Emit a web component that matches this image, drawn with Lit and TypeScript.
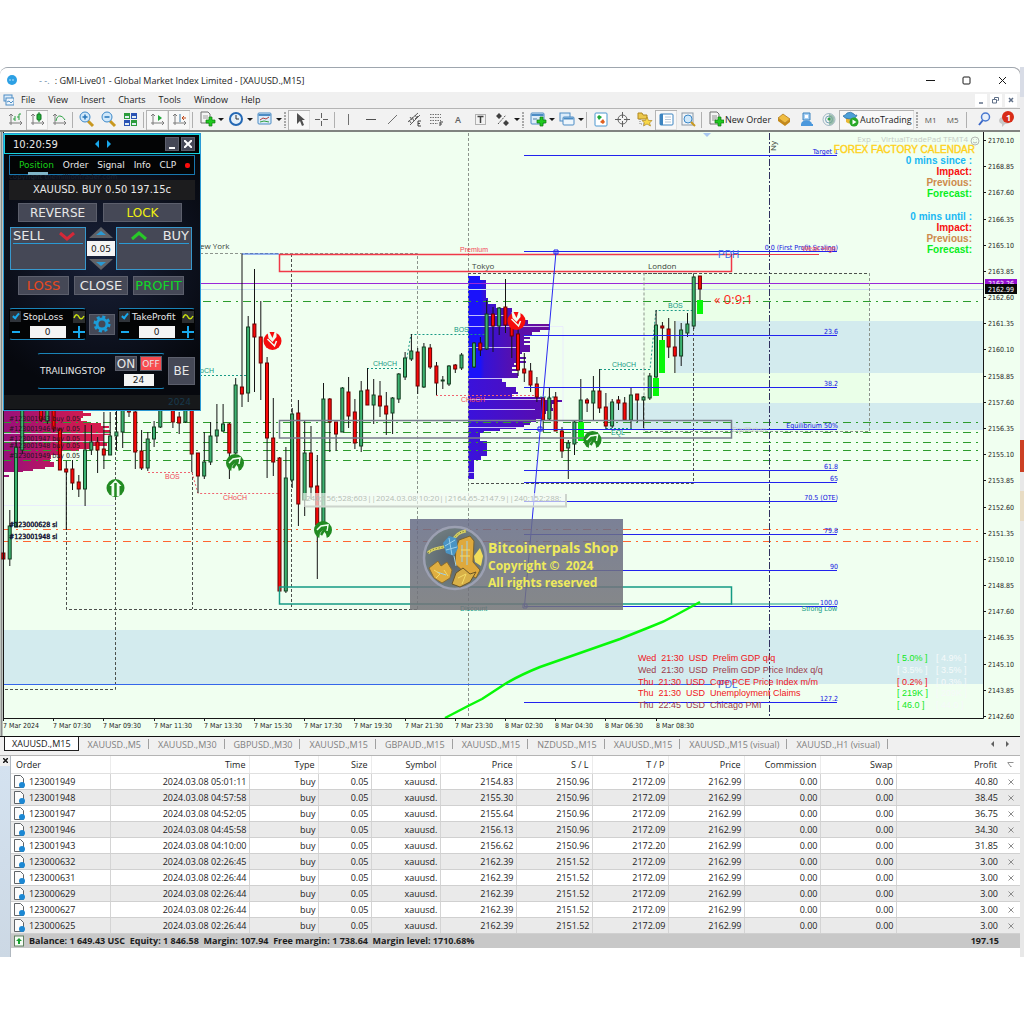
import { LitElement, html, css, svg } from "lit";
import { customElement } from "lit/decorators.js";

type Candle = [number, number, number, number, number, "g" | "r"];

// slot, high, body top, body bottom, low, direction
const candles: Candle[] = [
  [0, 543, 553, 559, 566, "r"], [1, 510, 526, 559, 566, "g"], [2, 440, 447, 527, 527, "g"],
  [3, 400, 400, 450, 454, "g"], [6, 400, 400, 420, 422, "r"], [7, 400, 400, 421, 424, "g"],
  [8, 400, 400, 429, 432, "r"], [9, 428, 429, 470, 470, "r"], [10, 461, 469, 472, 530, "r"],
  [11, 460, 469, 483, 490, "r"], [12, 475, 482, 489, 497, "r"], [13, 425, 450, 489, 506, "g"],
  [14, 425, 442, 450, 455, "g"], [15, 437, 442, 450, 473, "r"], [16, 412, 449, 455, 469, "r"],
  [17, 412, 436, 455, 455, "g"], [18, 411, 432, 436, 450, "g"], [19, 402, 402, 432, 448, "g"],
  [20, 402, 402, 412, 417, "r"], [21, 411, 412, 452, 469, "r"], [22, 430, 451, 468, 470, "r"],
  [23, 432, 439, 468, 471, "g"], [24, 421, 427, 439, 447, "g"], [25, 405, 405, 427, 428, "g"],
  [27, 402, 402, 422, 428, "r"], [28, 412, 417, 423, 434, "r"], [29, 402, 402, 422, 423, "g"],
  [30, 402, 402, 454, 472, "r"], [31, 453, 453, 476, 493, "r"], [32, 432, 462, 476, 479, "g"],
  [33, 422, 436, 462, 465, "g"], [34, 404, 430, 436, 443, "g"], [35, 404, 424, 431, 432, "g"],
  [36, 423, 424, 453, 479, "r"], [37, 378, 385, 453, 454, "g"], [38, 254, 387, 394, 407, "r"],
  [39, 316, 327, 393, 402, "g"], [40, 269, 324, 337, 392, "r"], [41, 301, 337, 363, 400, "r"],
  [42, 357, 363, 438, 478, "r"], [43, 398, 438, 462, 476, "r"], [44, 457, 458, 591, 592, "r"],
  [45, 447, 478, 591, 593, "g"], [46, 408, 414, 480, 488, "g"], [47, 400, 413, 504, 526, "r"],
  [48, 421, 453, 500, 516, "g"], [49, 426, 453, 487, 499, "r"], [50, 455, 486, 525, 579, "r"],
  [51, 383, 399, 530, 535, "g"], [52, 398, 399, 422, 452, "r"], [53, 422, 422, 434, 451, "r"],
  [54, 387, 388, 432, 432, "g"], [55, 377, 392, 416, 428, "r"], [56, 399, 412, 443, 449, "r"],
  [57, 381, 391, 446, 452, "g"], [58, 368, 390, 405, 405, "r"], [59, 379, 395, 405, 424, "g"],
  [60, 381, 396, 406, 417, "r"], [61, 392, 406, 414, 435, "r"], [62, 397, 398, 413, 434, "g"],
  [63, 373, 374, 399, 403, "g"], [64, 352, 358, 377, 380, "g"], [65, 334, 351, 359, 361, "g"],
  [66, 348, 352, 386, 394, "r"], [67, 343, 347, 387, 388, "g"], [68, 344, 348, 367, 369, "r"],
  [69, 362, 366, 383, 395, "r"], [70, 376, 380, 381, 389, "g"], [71, 365, 366, 384, 386, "g"],
  [72, 364, 365, 369, 373, "r"], [73, 353, 355, 368, 370, "g"], [75, 342, 343, 367, 368, "g"],
  [76, 337, 343, 350, 356, "r"], [77, 300, 314, 349, 350, "g"], [78, 307, 314, 326, 352, "r"],
  [79, 307, 308, 326, 335, "g"], [80, 279, 307, 325, 333, "r"], [81, 320, 323, 336, 358, "r"],
  [82, 316, 334, 370, 376, "r"], [83, 353, 369, 373, 382, "r"], [84, 363, 371, 385, 392, "r"],
  [85, 377, 384, 397, 402, "r"], [86, 397, 398, 420, 432, "r"], [87, 387, 398, 419, 420, "g"],
  [88, 392, 397, 431, 431, "r"], [89, 427, 431, 451, 458, "r"], [90, 440, 443, 448, 479, "g"],
  [91, 420, 422, 444, 455, "g"], [92, 379, 400, 422, 422, "g"], [93, 398, 400, 403, 412, "r"],
  [94, 376, 391, 403, 420, "g"], [95, 369, 391, 408, 413, "r"], [96, 393, 407, 426, 430, "r"],
  [97, 399, 402, 426, 428, "g"], [98, 396, 400, 403, 410, "r"], [99, 397, 403, 420, 421, "r"],
  [100, 387, 395, 420, 428, "g"], [101, 394, 394, 400, 422, "r"], [102, 396, 397, 400, 428, "g"],
  [103, 373, 376, 398, 400, "g"], [104, 310, 325, 377, 378, "g"], [105, 322, 326, 328, 340, "r"],
  [106, 318, 329, 347, 358, "r"], [107, 321, 347, 356, 373, "r"], [108, 323, 330, 356, 366, "g"],
  [109, 313, 324, 333, 337, "g"], [110, 276, 277, 326, 329, "g"], [111, 276, 276, 289, 314, "r"],
];
const slotX = (n: number) => Math.round((3.5 + 6.275 * n) * 10) / 10;

// top, bottom, width
const tokyoProfile = [
  [276, 280, 12], [280, 298, 18], [298, 304, 20], [304, 308, 28], [308, 312, 44], [312, 316, 48],
  [316, 320, 53], [320, 324, 60], [324, 330, 82], [330, 332, 72], [332, 335, 64], [335, 337, 56],
  [337, 339, 62], [339, 341, 56], [341, 343, 62], [343, 345, 56], [345, 352, 62], [352, 354, 54],
  [354, 357, 48], [357, 359, 58], [359, 361, 50], [361, 363, 58], [363, 365, 46], [365, 367, 52],
  [367, 369, 44], [369, 371, 50], [371, 373, 44], [373, 378, 50], [378, 382, 34], [382, 387, 38],
  [387, 392, 48], [392, 394, 50], [394, 397, 44], [397, 400, 76], [400, 402, 94], [402, 404, 88],
  [404, 408, 84], [408, 411, 85], [411, 414, 78], [414, 419, 74], [419, 422, 68], [422, 425, 62],
  [425, 427, 56], [427, 429, 48], [429, 431, 32], [431, 433, 16], [433, 441, 12], [441, 456, 19],
  [456, 460, 13], [460, 479, 6],
];
const asiaProfile = [
  [410, 413, 80], [413, 416, 88], [416, 418, 80], [418, 421, 78], [421, 423, 84], [423, 426, 98],
  [426, 428, 106], [428, 430, 100], [430, 435, 107], [435, 442, 101], [442, 446, 104], [446, 449, 90],
  [449, 451, 76], [451, 455, 56], [455, 459, 48], [459, 462, 47], [462, 467, 51], [467, 469, 42],
  [469, 471, 30], [471, 472, 20], [475, 477, 6],
];

const fibs: [number, string][] = [
  [155, "Target 1"], [251, "0.0 (First Profit Scaling)"], [335, "23.6"], [387, "38.2"],
  [429, "Equilibrium 50%"], [470, "61.8"], [482, "65"], [501, "70.5 (OTE)"], [534, "79.8"],
  [570, "90"], [606, "100.0"], [702, "127.2"],
];

const prices = Array.from({ length: 23 }, (_, i) => (2170.1 - i * 1.25).toFixed(2));
const times = [
  "7 Mar 2024", "7 Mar 07:30", "7 Mar 09:30", "7 Mar 11:30", "7 Mar 13:30", "7 Mar 15:30", "7 Mar 17:30",
  "7 Mar 19:30", "7 Mar 21:30", "7 Mar 23:30", "8 Mar 02:30", "8 Mar 04:30", "8 Mar 06:30", "8 Mar 08:30",
];

const news: [string, string, string, string, string][] = [
  ["Wed\u00a0 21:30\u00a0 USD\u00a0 Prelim GDP q/q", "hot", "[ 5.0% ]", "up", "[ 4.9% ]"],
  ["Wed\u00a0 21:30\u00a0 USD\u00a0 Prelim GDP Price Index q/q", "mild", "[ 3.5% ]", "flat", "[ 3.5% ]"],
  ["Thu\u00a0 21:30\u00a0 USD\u00a0 Core PCE Price Index m/m", "hot", "[ 0.2% ]", "down", "[ 0.3% ]"],
  ["Thu\u00a0 21:30\u00a0 USD\u00a0 Unemployment Claims", "hot", "[ 219K ]", "up", "[ 209K ]"],
  ["Thu\u00a0 22:45\u00a0 USD\u00a0 Chicago PMI", "mild", "[ 46.0 ]", "up", "[ 44.0 ]"],
];

const calendar: [number, string, string][] = [
  [164, "0 mins since :", "c-sky"], [175, "Impact:", "c-red"], [186, "Previous:", "c-tan"], [197, "Forecast:", "c-lime"],
  [220, "0 mins until :", "c-sky"], [231, "Impact:", "c-red"], [242, "Previous:", "c-tan"], [253, "Forecast:", "c-lime"],
];

@customElement("price-chart")
export class PriceChart extends LitElement {
  static styles = css`
    :host { display: block; }
    svg { display: block; width: 100%; height: auto; }
    text { font-family: "DejaVu Sans Condensed", "DejaVu Sans", sans-serif; font-size: 7px; }
    .axis { fill: #222; }
    .lite { font-family: "Open Sans", sans-serif; font-size: 8px; }
    .struct, .news, .fact, .head { font-family: "Liberation Sans", sans-serif; }
    .struct { font-size: 7px; }
    .mark { font-family: "Liberation Sans", sans-serif; font-size: 10px; fill: #3a6fe8; }
    .news { font-size: 9px; }
    .fact { font-size: 10px; font-weight: bold; text-anchor: end; }
    .head { font-size: 10px; text-anchor: end; fill: #ffd21a; stroke: #ffd21a; stroke-width: .4; }
    .end { text-anchor: end; }
    .fib { fill: #1212e0; text-anchor: end; }
    .timer { font-family: "Open Sans", sans-serif; font-size: 13px; fill: #ff2418; }
    .tip { font-family: "Open Sans", sans-serif; font-size: 8px; fill: #b4bcb4; }
    .sign { font-family: "Open Sans", sans-serif; font-weight: bold; fill: #eeea5c; font-size: 12px; }
    .sign.big { font-size: 14px; }
    .tag { fill: #fff; }
    .order { fill: #241420; }
    .stop { fill: #101030; stroke: #101030; stroke-width: .4; }
    .hot { fill: #f01420; } .mild { fill: #9c3c4c; }
    .up { fill: #10e820; } .down { fill: #f01420; } .flat { fill: #f6fafa; }
    .c-sky { fill: #18b8f4; } .c-red { fill: #f81010; } .c-tan { fill: #cd8a4c; } .c-lime { fill: #08ee20; }
    .c-teal { fill: #149a84; } .c-rose { fill: #f04858; } .c-dark { fill: #3a443a; } .c-ghost { fill: #c4ccc4; }
    .wick { stroke: #141414; stroke-width: 1; }
    .body-g { fill: #3cb371; stroke: #143c20; }
    .body-r { fill: #fa0808; stroke: #600; }
    .dash { fill: none; stroke: #4c504c; stroke-dasharray: 3 2; }
    .pale { stroke: #8c948c; }
    .buy-line { fill: none; stroke: #2c9c2c; stroke-dasharray: 8 5 2 5; }
    .stop-line { fill: none; stroke: #ff6430; stroke-dasharray: 8 5 2 5; }
    .ask { fill: none; stroke: #9a28d8; }
    .bid { fill: none; stroke: #c8e0f2; }
    .t-line { fill: none; stroke: #1a9a86; stroke-dasharray: 2 2; }
    .r-line { fill: none; stroke: #f06470; stroke-dasharray: 2 2; }
    .fib-line { fill: none; stroke: #2222ee; }
    .lime { fill: #08f808; }
  `;

  private arrow(x: number, y: number, kind: "up" | "rise" | "fall") {
    const fill = kind === "fall" ? "#f60c0c" : "#228b22";
    const shape =
      kind === "up"
        ? svg`<path d="M0-8L6-2H4V8H-4V-2H-6Z" fill="#f0fff0"/><path d="M0-5V9" stroke=${fill} stroke-width="2.500"/>`
        : kind === "rise"
          ? svg`<path d="M-4 9L-3 3L0 0L3 4L4 9Z" fill="#f0fff0"/><path d="M-6 0L-2-4L5-5L4 1" stroke="#f0fff0" stroke-width="1.500" fill="none"/><path d="M-2 5L3-3" stroke=${fill} stroke-width="2.500"/>`
          : svg`<path d="M-5-9L-4-3L0 1L4-4V-9Z" fill="#f0fff0"/><path d="M-3-9L0-3L2-9" fill=${fill}/><path d="M-5-2L2 5L4 0" stroke="#f0fff0" stroke-width="1.500" fill="none"/>`;
    return svg`<g transform="translate(${x} ${y})"><circle r="9" fill=${fill}/>${shape}</g>`;
  }

  render() {
    return html`<svg viewBox="0 132 1020 604" role="img" aria-label="XAUUSD M15 chart">
      <defs>
        <linearGradient id="vp" gradientUnits="userSpaceOnUse" x1="468" x2="550" y1="0" y2="0">
          <stop offset="0" stop-color="#1a12fa"/><stop offset=".15" stop-color="#1a12fa"/>
          <stop offset=".2" stop-color="#3412d8"/><stop offset=".5" stop-color="#5210b4"/><stop offset="1" stop-color="#6a0c98"/>
        </linearGradient>
        <linearGradient id="vpLow" gradientUnits="userSpaceOnUse" x1="468" x2="550" y1="0" y2="0">
          <stop offset="0" stop-color="#3a12dc"/><stop offset="1" stop-color="#5a0cac"/>
        </linearGradient>
        <linearGradient id="ap" gradientUnits="userSpaceOnUse" x1="3" x2="90" y1="0" y2="0">
          <stop offset="0" stop-color="#98107c"/><stop offset="1" stop-color="#d41c4c"/>
        </linearGradient>
        <linearGradient id="sheet" x1="0" x2="0" y1="0" y2="1">
          <stop offset="0" stop-color="#686c88"/><stop offset="1" stop-color="#747478"/>
        </linearGradient>
        <radialGradient id="coin"><stop offset="0" stop-color="#55606a"/><stop offset="1" stop-color="#6f7c80"/></radialGradient>
      </defs>
      <rect x="0" y="132" width="1020" height="604" fill="#f0fff0"/>
      <path d="M1.500 132V736" stroke="#8c8c8c" stroke-width="2"/>
      <rect x="644" y="273" width="225" height="158" fill="#eaffe8"/>
      <path d="M3 630H983V684H3ZM676 321H983V373H676ZM608 403H983V430H608Z" fill="#d3ebee"/>

      ${asiaProfile.map(([a, b, w]) => svg`<rect x="3" y=${a} width=${w} height=${b - a} fill="url(#ap)"/>`)}
      ${tokyoProfile.map(([a, b, w]) => svg`<rect x="468" y=${a} width=${w} height=${b - a} fill=${a < 378 ? "url(#vp)" : "url(#vpLow)"}/>`)}
      <path d="M3 433.500H110M3 441.500H104M3 505.500H115M468 289.500H487M468 315.500H504M468 326.500H563V430M468 347.500H520M468 378.500H510M468 399.500H548M468 409.500H535M468 427.500H530M468 472.500H474" stroke="#e8e8ff" stroke-opacity=".8" fill="none"/>

      <path class="ask" d="M200 283.500H983"/>
      <path class="bid" d="M200 289.500H983"/>
      ${[301.5, 422.5, 432.5, 442.5, 450.5, 460.5].map((y) => svg`<path class="buy-line" d="M${y < 400 ? 203 : 3} ${y}H983"/>`)}
      ${[529.5, 541.5].map((y) => svg`<path class="stop-line" d="M3 ${y}H983"/>`)}

      <path class="dash" d="M3.500 411V689.500H115.500V411M66.500 472V609.500H417.500M192.500 472V609M291.500 254V609"/>
      <path class="dash pale" d="M200 253.500H417.500V609M468.500 133V718"/>
      <path class="dash" d="M468 273.500H693.500V483.500H468M644 273.500H869"/>
      <path class="dash pale" d="M869.500 273V431.500H644V273"/>
      <path d="M769.500 133V718" stroke="#303060" stroke-dasharray="7 2 2 2"/>

      <path class="t-line" d="M200 375.500H248M367 368.500H405L411 334.500H486M600 369.500H650L656 310.500H694M606 428.500H632M540 397H556"/>
      <path class="r-line" d="M148 472.500H192L198 493.500H279M436 395.500H537"/>
      <path d="M242 254H279M3 684.500H712" stroke="#3466ea" fill="none"/>

      ${candles.map(([n, hi, top, bottom, lo, dir]) => {
        const x = slotX(n);
        return svg`<path class="wick" d="M${x} ${hi}V${lo}"/><rect class="body-${dir}" x=${x - 1.6} y=${top} width="3" height=${Math.max(bottom - top, 1)}/>`;
      })}
      <path d="M578 422H584V441H578ZM653 378H659V396H653ZM659 340H665V373H659ZM697 300H703V314H697Z" class="lime"/>

      <path d="M279.500 254.500H731.500V271.500H279.500Z" fill="none" stroke="#f03848" stroke-width="1.500"/>
      <path d="M731 254.500H819" stroke="#f03848" fill="none"/>
      <path d="M279.500 420.500H731.500V438H279.500Z" fill="none" stroke="#787c8c" stroke-width="1.500"/>
      <path d="M279.500 587H731.500V604H279.500Z" fill="none" stroke="#149a84" stroke-width="1.500"/>
      <path d="M731 604H819" stroke="#149a84" fill="none"/>

      ${fibs.map(([y, label]) => svg`<path class="fib-line" d="M524 ${y + 0.5}H837"/><text class="fib" x="838" y=${y - 1}>${label}</text>`)}
      <path d="M556 252L524.500 606" stroke="#2a2af0"/>
      <path d="M554 250H558V254H554ZM538 427H542V431H538ZM523 604H527V608H523Z" fill="none" stroke="#2222ee"/>

      <path d="M445 718L468 706L482 699L505 684Q520 675 540 667L580 653L620 639L650 627Q664 622 676 615L700 602" fill="none" stroke="#08f808" stroke-width="2.500" stroke-linejoin="round"/>

      ${this.arrow(115.5, 488, "up")} ${this.arrow(235, 463, "rise")} ${this.arrow(323, 530, "rise")}
      ${this.arrow(592.5, 440, "rise")} ${this.arrow(272.5, 341, "fall")} ${this.arrow(516.5, 321, "fall")}

      <text class="lite c-dark" x="200" y="249">ew York</text>
      <text class="lite c-dark" x="472" y="269">Tokyo</text>
      <text class="lite c-dark" x="648" y="269">London</text>
      <text class="struct c-rose" x="460" y="252">Premium</text>
      <text class="struct c-teal" x="460" y="611">Discount</text>
      <text class="struct c-rose end" x="836" y="251">Weak High</text>
      <text class="struct c-teal end" x="837" y="611">Strong Low</text>
      <text class="struct c-ghost" x="732" y="432">Equilibrium</text>
      <text class="mark" x="718" y="258">PDH</text>
      <text class="mark" x="718" y="688">PDL</text>
      <text class="struct c-teal" x="200" y="373">oCH</text>
      <text class="struct c-rose" x="165" y="479">BOS</text>
      <text class="struct c-rose" x="223" y="500">CHoCH</text>
      <text class="struct c-teal" x="373" y="366">CHoCH</text>
      <text class="struct c-teal" x="454" y="332">BOS</text>
      <text class="struct c-rose" x="461" y="402">CHoCH</text>
      <text class="struct c-teal" x="612" y="367">CHoCH</text>
      <text class="struct c-teal" x="668" y="308">BOS</text>
      <text class="struct c-teal" x="611" y="435">EQL</text>
      <text class="timer" x="714" y="304">« 0:9:1</text>
      <text class="lite c-dark" transform="translate(776 151) rotate(-90)">Ny</text>

      ${[421, 431, 441, 448, 458].map((y, i) => svg`<text class="order" x="9" y=${y}>#12300194${[3, 6, 7, 8, 9][i]} buy 0.05</text>`)}
      <text class="stop" x="9" y="527">#123000628 sl</text>
      <text class="stop" x="9" y="539">#123001948 sl</text>

      <path d="M303 493H567V507H303Z" fill="#f4fbf4" fill-opacity=".65"/>
      <path d="M305 506.500H566V494" fill="none" stroke="#ccd4cc" stroke-width="2"/>
      <text class="tip" x="306" y="501">240;156;528;603||2024.03.08 10:20||2164.65-2147.9||240;152;288;</text>

      <g>
        <rect x="410" y="519" width="213" height="91" fill="url(#sheet)" fill-opacity=".86"/>
        <circle cx="455" cy="558" r="31" fill="url(#coin)" stroke="#9ca0b2" stroke-width="2.500"/>
        <path d="M428 553C434 546 444 550 450 543S458 532 466 531" fill="none" stroke="#d6cf62" stroke-width="3"/>
        <path d="M428 553C434 546 444 550 450 543S458 532 466 531" fill="none" stroke="#6c7038" stroke-dasharray="1 2"/>
        <path d="M459 540L470 536L474 541L473 562L480 570L476 578L464 572L455 564L456 548Z" fill="#dfa93c" stroke="#7a6430"/>
        <path d="M429 568L438 561L441 566L447 562L452 570L450 578L442 583L434 578Z" fill="#e0ae40" stroke="#8a6c30"/>
        <path d="M452 584L456 573L463 568L470 574L476 572L470 582L460 587Z" fill="#d8b048" stroke="#6a5428"/>
        <path d="M474 556L480 548L483 556L481 566L475 562Z" fill="#f0dc5c"/>
        <path d="M443 543L449 536L456 538L458 548L454 556L446 553Z" fill="#4a94c4"/>
        <path d="M445 546L455 540M446 550L457 547M449 538L452 555M454 556L456 566M437 572L446 575M462 545V562M467 541V565" stroke="#9cd0ea" fill="none"/>
        <path d="M434 570L440 574L436 578M444 570L448 576M458 578L466 574L462 584M461 550H470M460 556H470" stroke="#f4dc68" fill="none"/>
        <text class="sign big" x="488" y="553">Bitcoinerpals Shop</text>
        <text class="sign" x="488" y="570">Copyright ©&#160; 2024</text>
        <text class="sign" x="488" y="587">All rights reserved</text>
      </g>

      ${news.map(([text, tone, actual, dir, forecast], i) => {
        const y = 661 + Math.round(i * 11.75);
        return svg`<text class="news ${tone}" x="638" y=${y}>${text}</text><text class="news ${dir}" x="897" y=${y}>${actual}</text><text class="news flat" x="936" y=${y}>${forecast}</text>`;
      })}

      <text class="lite c-ghost end" x="968" y="142">Exp ... VirtualTradePad TFMT4</text>
      <circle cx="975" cy="141" r="4" fill="none" stroke="#b4bab4"/>
      <path d="M973 142Q975 144 977 142M973.500 139.500V140M976.500 139.500V140" fill="none" stroke="#b4bab4"/>
      <text class="head" x="975" y="153">FOREX FACTORY CALENDAR</text>
      ${calendar.map(([y, label, tone]) => svg`<text class="fact ${tone}" x="972" y=${y}>${label}</text>`)}
      <path d="M703 133H711L707 137Z" fill="#a8c8f0"/>

      <path d="M983.500 132V718.500H3M3.500 132V718" fill="none" stroke="#181818"/>
      ${prices.map((p, i) => {
        const y = Math.round(140 + i * 26.18);
        return svg`<path d="M983 ${y + 0.5}H986" stroke="#181818"/><text class="axis" x="988" y=${y + 3}>${p}</text>`;
      })}
      <rect x="985" y="279" width="32" height="9" fill="#9410d0"/><text class="tag" x="988" y="286">2163.26</text>
      <rect x="985" y="284" width="32" height="10" fill="#080808"/><text class="tag" x="988" y="292">2162.99</text>
      ${times.map((t, i) => {
        const x = Math.round(3 + i * 50.2);
        return svg`<path d="M${x + 0.5} 718V721" stroke="#181818"/><text class="axis" x=${x} y="728">${t}</text>`;
      })}
    </svg>`;
  }
}

@customElement("trade-pad")
export class TradePad extends LitElement {
  static styles = css`
    :host {
      display: flex; flex-direction: column; gap: 3px; width: 198px; box-sizing: border-box;
      border: 1px solid #2a9ad4; background: radial-gradient(circle at 50% 45%, #182038, #06080e 75%);
      font: 9px "DejaVu Sans", sans-serif; color: #e8e8e8;
    }
    button, input { font: inherit; color: inherit; border: 0; padding: 0; margin: 0; box-sizing: border-box; }
    button { display: flex; align-items: center; justify-content: center; background: #454856; border: 1px solid #5c5f6c; }
    input { background: #f4f4f4; color: #181818; text-align: center; min-width: 0; border-radius: 0; }
    svg { display: block; fill: none; }
    .head { display: flex; align-items: center; height: 18px; padding: 0 4px 0 8px; background: #030405; border: 1px solid #18d4dc; gap: 2px; font-size: 10px; }
    .head .move { margin: 0 auto 0 34px; }
    .head button { width: 14px; height: 14px; font-size: 12px; }
    .tabs { display: flex; align-items: center; justify-content: space-between; height: 20px; box-sizing: border-box; margin: -2px 5px 0; padding: 0 4px 0 9px; border: 1px solid #1878b0; background: #030405; }
    .tabs button { background: none; border: 0; position: relative; }
    .tabs .on { color: #18d018; }
    .tabs .on::after { content: ""; position: absolute; left: 9px; top: 12px; width: 20px; height: 3px; background: #7fb4c8; }
    .dot { width: 5px; height: 5px; border-radius: 2px; background: #fa0c0c; }
    .copy { margin: -3px 5px; height: 5px; line-height: 5px; font-size: 7px; color: #1e2430; }
    .info { margin: 0 5px; background: #1c1c1e; text-align: center; height: 20px; line-height: 20px; white-space: nowrap; font-size: 10px; }
    .pair { display: grid; grid-template-columns: 1fr 1fr; gap: 6px; padding: 0 18px 0 14px; }
    .pair button, .trio button { height: 19px; font-size: 12px; white-space: nowrap; }
    .deal { display: grid; grid-template-columns: 76px 1fr 76px; gap: 1px; padding: 2px 8px 0 6px; }
    .deal .side { height: 43px; padding: 0 2px; border-color: #3898cc; align-items: flex-start; justify-content: space-between; font-size: 13px; line-height: 15px; flex-wrap: wrap; align-content: flex-start; }
    .side::after { content: ""; width: 100%; border-top: 1px solid #2a9ad4; }
    .side svg { margin: 2px 6px 0; }
    .lot { display: flex; flex-direction: column; justify-content: space-between; align-items: center; }
    .lot button { background: none; border: 0; }
    .lot input { width: 100%; height: 15px; }
    .trio { display: grid; grid-template-columns: 51px 54px 51px; gap: 5px; padding: 3px 14px 0; }
    .trio button { font-size: 13px; }
    .limits { display: grid; grid-template-columns: 77px 1fr 77px; gap: 3px; padding: 10px 5px 0; align-items: center; }
    .box { border: 1px solid #1a84b8; border-left-color: transparent; border-right-color: transparent; border-radius: 3px; display: flex; flex-direction: column; gap: 2px; padding: 1px 0; background: #030405; }
    .line { display: flex; align-items: center; justify-content: space-between; height: 13px; }
    .line button { width: 12px; height: 12px; color: #18a8ec; background: none; border: 0; }
    .line .wave { background: #2c2e30; color: #c8e010; }
    .line input[type="text"] { width: 36px; height: 12px; }
    label { display: flex; align-items: center; gap: 2px; white-space: nowrap; }
    label input { appearance: none; width: 11px; height: 11px; background: #30343a; position: relative; }
    label input::after { content: ""; position: absolute; left: 4px; top: 1px; width: 2px; height: 5px; border: solid #18a8ec; border-width: 0 2px 2px 0; transform: rotate(40deg); }
    .gear { height: 21px; color: #1c9cd8; }
    .trail { display: flex; align-items: center; gap: 3px; padding: 10px 5px 0 33px; }
    .trail .box { flex: 1; flex-direction: row; align-items: center; justify-content: space-between; padding: 2px; background: none; }
    .trail .name { font-size: 9px; }
    .switch { display: grid; grid-template-columns: 22px 22px; gap: 3px; justify-items: center; }
    .switch button { width: 22px; height: 15px; font-size: 12px; }
    .switch .off { background: #f84c50; font-size: 9px; }
    .switch input { grid-column: 1 / 3; width: 30px; height: 12px; }
    .be { width: 27px; height: 28px; font-size: 12px; }
    .foot { margin: 3px 0 1px; height: 14px; line-height: 14px; background: #16181a; color: #16384c; text-align: right; padding-right: 9px; }
    .warn { color: #e84820; } .gain { color: #10d828; } .lock { color: #f0f010; }
  `;

  private limit(id: string, label: string) {
    return html`<div class="box">
      <div class="line"><label><input type="checkbox" id=${id} checked />${label}</label>
        <button class="wave" aria-label="${label} trail"><svg width="12" height="8" viewBox="0 0 12 8"><path d="M1 5C3 0 5 2 6 4S9 7 11 3" stroke="currentColor" stroke-width="1.500"/></svg></button></div>
      <div class="line"><button aria-label="Less"><svg width="10" height="10"><path d="M1 5H9" stroke="currentColor" stroke-width="2"/></svg></button>
        <input type="text" aria-label="${label} value" value="0" />
        <button aria-label="More"><svg width="12" height="12"><path d="M0 6H12M6 0V12" stroke="currentColor" stroke-width="2"/></svg></button></div>
    </div>`;
  }

  render() {
    return html`
      <div class="head"><span>10:20:59</span>
        <svg class="move" width="18" height="8"><path d="M5 0V8L1 4ZM13 0V8L17 4Z" fill="#18a8ec"/></svg>
        <button aria-label="Minimize"><svg width="8" height="10"><path d="M1 9H7" stroke="#fff" stroke-width="2"/></svg></button>
        <button aria-label="Close"><svg width="8" height="8"><path d="M0 0L8 8M8 0L0 8" stroke="#fff" stroke-width="2"/></svg></button></div>
      <div class="tabs"><button class="on">Position</button><button>Order</button><button>Signal</button><button>Info</button><button>CLP</button><span class="dot"></span></div>
      <div class="copy">copyright themilliontrader.com</div>
      <div class="info">XAUUSD. BUY 0.50 197.15c</div>
      <div class="pair"><button>REVERSE</button><button class="lock">LOCK</button></div>
      <div class="deal">
        <button class="side">SELL<svg width="20" height="12"><path d="M3 3L10 9L17 3" stroke="#d42838" stroke-width="3"/></svg></button>
        <div class="lot">
          <button aria-label="Raise lot"><svg width="24" height="11"><path d="M0 11L12 0L24 11Z" fill="#606268"/><path d="M7 8L12 4L17 8Z" fill="#2a9ad4"/></svg></button>
          <input type="text" aria-label="Lot size" value="0.05" />
          <button aria-label="Lower lot"><svg width="24" height="11"><path d="M0 0L12 11L24 0Z" fill="#606268"/><path d="M7 3L12 7L17 3Z" fill="#2a9ad4"/></svg></button>
        </div>
        <button class="side"><svg width="24" height="12"><path d="M7 9L14 3L21 9" stroke="#28c828" stroke-width="3"/></svg>BUY</button>
      </div>
      <div class="trio"><button class="warn">LOSS</button><button>CLOSE</button><button class="gain">PROFIT</button></div>
      <div class="limits">
        ${this.limit("sl", "StopLoss")}
        <button class="gear" aria-label="Settings"><svg width="18" height="18" viewBox="-9 -9 18 18"><circle r="5" stroke="currentColor" stroke-width="3"/><circle r="7" stroke="currentColor" stroke-width="3" stroke-dasharray="3 2.500"/></svg></button>
        ${this.limit("tp", "TakeProfit")}
      </div>
      <div class="trail">
        <div class="box"><span class="name">TRAILINGSTOP</span>
          <div class="switch"><button>ON</button><button class="off">OFF</button><input type="text" aria-label="Trailing distance" value="24" /></div></div>
        <button class="be">BE</button>
      </div>
      <div class="foot">2024</div>`;
  }
}

const caret = svg`<path d="M20 7H26L23 10Z" fill="#181818"/>`;
const axes = svg`<path d="M4 3V14M2 12H15M2 5L4 3L6 5M13 10L15 12L13 14" stroke="#7c7c7c"/>`;
const sheetIcon = svg`<rect x="2" y="2" width="13" height="11" rx="1" fill="#dcecfa" stroke="#4c8cc4"/><path d="M2.500 4H14.500" stroke="#4c8cc4" stroke-width="2"/>`;
const plus = svg`<path d="M11 6H14V9H17V12H14V15H11V12H8V9H11Z" fill="#20c820" stroke="#107810" stroke-width=".7"/>`;

const glyphs: Record<string, unknown> = {
  bars: svg`${axes}<path d="M8 10V5M8 8H6M12 9V3H14M12 6H10" stroke="#28a040" />`,
  candle: svg`${axes}<path d="M10 1V11" stroke="#188828"/><rect x="8" y="3" width="4" height="6" rx="1" fill="#20b038" stroke="#107020"/>`,
  line: svg`${axes}<path d="M5 10C6 3 11 4 14 9" stroke="#28a040"/>`,
  zoomIn: svg`<path d="M10 10L15 15" stroke="#c89820" stroke-width="3"/><circle cx="7" cy="6" r="5" fill="#d0e8fa" stroke="#3c88c8"/><path d="M4.500 6H9.500M7 3.500V8.500" stroke="#2474b8" stroke-width="1.500"/>`,
  zoomOut: svg`<path d="M10 10L15 15" stroke="#c89820" stroke-width="3"/><circle cx="7" cy="6" r="5" fill="#d0e8fa" stroke="#3c88c8"/><path d="M4.500 6H9.500" stroke="#2474b8" stroke-width="1.500"/>`,
  tiles: svg`<rect x="2" y="2" width="6" height="6" fill="#2c9c3c"/><rect x="9" y="2" width="6" height="6" fill="#2c54b4"/><rect x="2" y="9" width="6" height="6" fill="#2c54b4"/><rect x="9" y="9" width="6" height="6" fill="#2c9c3c"/><path d="M3 5H7V7H3ZM10 5H14V7H10ZM3 12H7V14H3ZM10 12H14V14H10Z" fill="#e0eef4"/>`,
  scroll: svg`${axes}<path d="M9 4V10L13 7Z" fill="#20a838"/>`,
  shift: svg`${axes}<path d="M9 3V11" stroke="#3c7ca8"/><path d="M15 7H11M13 5L11 7L13 9" stroke="#c04818"/>`,
  newChart: svg`<path d="M3 1H10L12 3V12H3Z" fill="#f4f4f4" stroke="#707070"/><path d="M5 5H10M5 7H10" stroke="#a0a0a0"/>${plus}${caret}`,
  clock: svg`<circle cx="9" cy="8" r="6" fill="#e4f0fa" stroke="#2468b4" stroke-width="2"/><path d="M9 4V8H12" stroke="#303030"/>${caret}`,
  template: svg`${sheetIcon}<path d="M4 9L7 7L10 8L13 6" stroke="#b04040"/><path d="M4 11L8 10L13 11" stroke="#30a040"/>${caret}`,
  cursor: svg`<path d="M6 2V13L9 10L11 15L13 14L11 9H14Z" fill="#505050"/>`,
  cross: svg`<path d="M8.500 2V7M8.500 10V15M2 8.500H7M10 8.500H15" stroke="#606060"/>`,
  vline: svg`<path d="M8.500 3V14" stroke="#707070"/>`,
  hline: svg`<path d="M4 8.500H14" stroke="#505050"/>`,
  trend: svg`<path d="M4 13L13 4" stroke="#707070"/>`,
  channel: svg`<path d="M2 11L12 2M4 14L14 4M3 9L5 12M6 6L8 10M9 4L11 7M6 9L4 6M9 8L12 5" stroke="#606060"/><path d="M15 10H12V15H15M12 12.500H14" stroke="#404040"/>`,
  fibo: svg`<path d="M2 3.500H13M2 6.500H13M2 9.500H13M2 12.500H10" stroke="#707070" stroke-dasharray="1.500 1"/><path d="M15 11H12V15M12 13H14" stroke="#404040"/>`,
  label: svg`<rect x="3.500" y="3.500" width="10" height="10" stroke="#707070" stroke-dasharray="1 1"/><path d="M5.500 5.500H11.500M8.500 5.500V12" stroke="#404040" stroke-width="1.500"/>`,
  shapes: svg`<path d="M2 5L5 2L8 5L5 8ZM9 12L12 9L15 12L12 15Z" fill="#404040"/><path d="M4 13L12 4" stroke="#505050" stroke-dasharray="2 1"/>${caret}`,
  indicator: svg`${sheetIcon}<path d="M4 8H8" stroke="#5080a0"/>${plus}${caret}`,
  windows: svg`<rect x="2" y="2" width="10" height="8" fill="#dcecfa" stroke="#4c8cc4"/><rect x="5" y="6" width="11" height="8" rx="1" fill="#eef6fc" stroke="#4c8cc4"/><path d="M5.500 7.500H15.500" stroke="#4c8cc4" stroke-width="2"/>${caret}`,
  market: svg`<rect x="3" y="2" width="12" height="13" rx="1" fill="#fff" stroke="#4c98d0"/><path d="M7 4L10 6L7 9L5 6Z" fill="#20a838"/><path d="M11 8L13 11L11 13L8 11Z" fill="#e06020"/>`,
  target: svg`<circle cx="8.500" cy="8.500" r="4.500" stroke="#606060"/><path d="M8.500 1V7M8.500 10V16M1 8.500H7M10 8.500H16" stroke="#606060"/>`,
  navigator: svg`<path d="M2 2H6L7 4H11V8H2Z" fill="#ecc84c" stroke="#b08820"/><path d="M4 8V13H8" stroke="#808080" stroke-dasharray="1 1"/><path d="M11 6L12.500 9.500H16L13.500 12L14.500 15L11 13L7.500 15L8.500 12L6 9.500H9.500Z" fill="#f8d848" stroke="#b08820" stroke-width=".7"/>`,
  terminal: svg`<rect x="2" y="3" width="13" height="11" rx="1" fill="#fff" stroke="#3c84c0"/><rect x="2" y="3" width="3" height="11" fill="#3c84c0"/><path d="M7 6H13M7 8.500H13M7 11H13" stroke="#b8c8d8"/>`,
  tester: svg`<rect x="2" y="2" width="11" height="12" fill="#f0f4f8" stroke="#8c98a4"/><circle cx="8" cy="8" r="4" fill="#d0e8fa" stroke="#3c88c8"/><path d="M11 11L15 15" stroke="#c89820" stroke-width="2"/>`,
  order: svg`<path d="M3 1H10L12 3V13H3Z" fill="#f4f4f4" stroke="#707070"/><path d="M5 5H10M5 7H10M5 9H9" stroke="#909090"/>${plus}`,
  meta: svg`<path d="M2 7L7 3L14 8L9 12Z" fill="#f0bc40" stroke="#a87010" stroke-width=".7"/><path d="M2 7L9 12V15L2 10ZM9 12L14 8V11L9 15Z" fill="#c48818"/>`,
  market2: svg`<path d="M5 2H12V9H5Z" fill="#a8d0f4" stroke="#3c84c0"/><path d="M3 13C4 8 13 8 14 13ZM3 13H15V15H3Z" fill="#4c98dc"/><path d="M7 4H10V7H7Z" fill="#fff"/>`,
  signal: svg`<circle cx="9" cy="8.500" r="6" stroke="#a0b8c4"/><circle cx="9" cy="8.500" r="3.500" stroke="#70a0b8"/><path d="M9 3A5.500 5.500 0 0 1 9 14Z" fill="#78a890" fill-opacity=".7"/><circle cx="9" cy="8" r="1.500" fill="#30a048"/>`,
  auto: svg`<path d="M4 6V11Q8 14 12 11V6L8 8Z" fill="#e8b838"/><path d="M1 5Q4 4 5 2Q9 0 12 3Q13 5 15 4Q14 8 8 8Q3 8 1 5Z" fill="#4ca0d8" stroke="#2c6c9c" stroke-width=".7"/><circle cx="12" cy="11" r="4.500" fill="#28a828"/><path d="M10.500 8.500V13.500L14.500 11Z" fill="#fff"/>`,
  search: svg`<path d="M7 9L3 14" stroke="#3c68c8" stroke-width="2"/><circle cx="9.500" cy="6" r="4" fill="#e8f0fa" stroke="#4878d0" stroke-width="1.500"/>`,
  alert: svg`<path d="M1 10Q1 6 6 6T12 10Q12 13 7 13L4 16V13Q1 12 1 10Z" fill="#c8c8c8"/><circle cx="10" cy="6" r="6" fill="#d82c18"/>`,
};

// "|" separator, ":" drag handle, otherwise glyph[!pressed][+drop-down]
const toolbar = [
  "bars", "candle!", "line", "|", "zoomIn", "zoomOut", "tiles", "|", "scroll!", "shift!", "|", "newChart+", "clock+", "template+",
  ":", "cursor!", "cross", "|", "vline", "hline", "trend", "channel", "fibo", "text", "label", "shapes+",
  ":", "indicator+", "windows+", "|", "market", "target", "navigator", "terminal!", "tester", "|",
];

const tabs = [
  "XAUUSD.,M15", "XAUUSD.,M5", "XAUUSD.,M30", "GBPUSD.,M30", "XAUUSD.,M15", "GBPAUD.,M15", "XAUUSD.,M15",
  "NZDUSD.,M15", "XAUUSD.,M15", "XAUUSD.,M15 (visual)", "XAUUSD.,H1 (visual)",
];

const columns = ["Order", "Time", "Type", "Size", "Symbol", "Price", "S / L", "T / P", "Price", "Commission", "Swap", "Profit"];
const orders = [
  ["123001949", "05:01:11", "2154.83", "2150.96", "2172.09", "40.80"],
  ["123001948", "04:57:58", "2155.30", "2150.96", "2172.09", "38.45"],
  ["123001947", "04:52:05", "2155.64", "2150.96", "2172.09", "36.75"],
  ["123001946", "04:45:58", "2156.13", "2150.96", "2172.09", "34.30"],
  ["123001943", "04:10:00", "2156.62", "2150.96", "2172.20", "31.85"],
  ["123000632", "02:26:45", "2162.39", "2151.52", "2172.09", "3.00"],
  ["123000631", "02:26:44", "2162.39", "2151.52", "2172.09", "3.00"],
  ["123000629", "02:26:44", "2162.39", "2151.52", "2172.09", "3.00"],
  ["123000627", "02:26:44", "2162.39", "2151.52", "2172.09", "3.00"],
  ["123000625", "02:26:44", "2162.39", "2151.52", "2172.09", "3.00"],
];

@customElement("app-root")
export class AppRoot extends LitElement {
  static styles = css`
    :host {
      display: grid; grid-template-columns: minmax(0, 1fr) 4px; padding: 67px 0; background: #fff;
      font: 9px "Open Sans", "Noto Sans", sans-serif; color: #1c1c1c;
    }
    button { font: inherit; color: inherit; background: none; border: 0; padding: 0; margin: 0; }
    svg { display: block; fill: none; }
    .window { border-top: 1px solid #9ea6ae; border-radius: 8px 8px 0 0; background: #f0f0f0; overflow: hidden; box-shadow: 1px 0 0 #b0b0b4; }
    .behind { background: linear-gradient(#d8dce6 0 30px, #ececee 30px 373px, #cc4024 373px 405px, #e8e8e8 405px 424px, #e8dcc4 424px 454px, #e8e8e8 454px); }
    .title { display: flex; align-items: center; height: 24px; background: #fff; padding: 0 0 0 7px; }
    .title .dots { margin: 0 3px 0 22px; color: #6888a8; }
    .title .caption { margin-right: auto; font-size: 9px; }
    .title button { width: 36px; height: 24px; display: grid; place-items: center; }
    .menu { display: flex; align-items: center; height: 16px; padding: 0 3px; gap: 13px; border-bottom: 1px solid #b4b4b4; }
    .menu .first { margin-right: -6px; }
    .menu button { line-height: 16px; }
    .mdi { margin-left: auto; display: flex; gap: 3px; }
    .mdi button { width: 12px; height: 13px; background: #fff; display: grid; place-items: center; }
    .tools { display: flex; align-items: center; height: 21px; padding: 0 3px 0 4px; border-bottom: 2px solid #808480; background: #f2f2f2; }
    .tool { width: 22px; height: 20px; display: flex; align-items: center; justify-content: flex-start; padding-left: 3px; box-sizing: border-box; flex: none; }
    .drop { width: 29px; }
    .pressed { background: #f8f8f8; box-shadow: inset 1px 1px 0 #b4b4b4, inset -1px -1px 0 #e0e0e0; }
    .letter { justify-content: center; padding: 0; color: #606060; font-weight: 600; }
    .wide { width: auto; gap: 1px; padding-right: 2px; white-space: nowrap; }
    .sep { flex: none; width: 1px; height: 16px; margin: 0 2px; background: #b0b0b0; }
    .grip { flex: none; width: 2px; height: 16px; margin: 0 2px; background: repeating-linear-gradient(#a8a8a8 0 2px, transparent 2px 3px); }
    .tf { justify-content: center; padding: 0; font-size: 8px; color: #505050; }
    .end { margin-left: auto; }
    .alert { position: relative; }
    .alert span { position: absolute; left: 11px; top: 2px; color: #fff; font-weight: bold; line-height: 12px; }
    .chart { position: relative; }
    .chart trade-pad { position: absolute; left: 3px; top: 1px; }
    .sheets { display: flex; align-items: center; height: 14px; border-top: 1px solid #101010; padding: 0 6px 4px 4px; color: #808080; }
    .sheets .tab { padding: 0 8px; height: 14px; line-height: 13px; white-space: nowrap; position: relative; }
    .sheets .tab + .tab { padding: 0 8px 0 9px; }
    .sheets .tab::after { content: ""; position: absolute; right: 0; top: 2px; height: 10px; border-right: 1px solid #a0a0a0; }
    .sheets .active { background: #fff; color: #181818; border: 1px solid #202020; border-top: 0; padding: 0 7px; }
    .sheets .active::after { display: none; }
    .sheets .prev { margin-left: auto; }
    .sheets .nav { width: 14px; display: grid; place-items: center; }
    .terminal { display: grid; grid-template-columns: 11px minmax(0, 1fr); border-top: 1px solid #b4b4b4; background: #fff; min-height: 201px; }
    .gutter { background: linear-gradient(#f0f0f0 0 10px, #d4e2f0 10px, #ccd8e4); border-right: 1px solid #b0b8c0; }
    .gutter button { display: grid; place-items: center; width: 10px; height: 8px; }
    table { width: 100%; border-collapse: collapse; table-layout: fixed; }
    .w-order { width: 99px; } .w-time { width: 139px; } .w-type, .w-symbol { width: 69px; } .w-size { width: 53px; }
    .w-num { width: 76px; } .w-x { width: 20px; }
    th, td { padding: 0 2px 0 3px; text-align: right; font-weight: normal; white-space: nowrap; overflow: hidden; border-right: 1px solid #d4d4d4; }
    th { height: 17px; padding: 0 3px; border-right-color: #ececec; border-bottom: 1px solid #e0e0e0; }
    td { height: 15px; line-height: 14px; border-bottom: 1px solid #d0d0d0; font-size: 9px; }
    th:first-child, td:first-child { text-align: left; }
    th:first-child { padding-left: 5px; }
    tbody tr:nth-child(even) { background: #eaeaea; }
    th:nth-child(12), td:nth-child(12), th:last-child, td:last-child { border-right: 0; }
    .id { display: flex; align-items: center; gap: 4px; }
    .shut { display: block; margin: 0 auto; }
    tfoot td { background: #c8c8c8; font-weight: bold; border: 0; white-space: pre; height: 14px; }
    tfoot td:nth-child(2) { padding: 0 1px; }
  `;

  private icon(name: string, width = 17) {
    return html`<svg width=${width} height="17" viewBox="0 0 ${width} 17" aria-hidden="true">${glyphs[name]}</svg>`;
  }

  private tool(spec: string) {
    if (spec === "|") return html`<span class="sep"></span>`;
    if (spec === ":") return html`<span class="grip"></span>`;
    const name = spec.replace(/[!+]/, "");
    if (name === "text") return html`<button class="tool letter" aria-label="Text">A</button>`;
    const drop = spec.endsWith("+");
    return html`<button class="tool ${drop ? "drop" : ""} ${spec.endsWith("!") ? "pressed" : ""}" aria-label=${name}>${this.icon(name, drop ? 26 : 17)}</button>`;
  }

  render() {
    return html`
      <main class="window">
        <header class="title">
          <svg width="10" height="10"><circle cx="5" cy="5" r="5" fill="#2ca0e4"/><path d="M2 5H8" stroke="#b8e0f8" stroke-dasharray="2 1"/></svg>
          <span class="dots">- -.&#160;</span><span class="caption">: GMI-Live01 - Global Market Index Limited - [XAUUSD.,M15]</span>
          <button aria-label="Minimize"><svg width="9" height="9"><path d="M0 4.500H9" stroke="#181818"/></svg></button>
          <button aria-label="Maximize"><svg width="9" height="9"><rect x="1" y="1" width="7" height="7" rx="1" stroke="#181818"/></svg></button>
          <button aria-label="Close"><svg width="9" height="9"><path d="M1 1L8 8M8 1L1 8" stroke="#181818"/></svg></button>
        </header>
        <nav class="menu">
          <svg class="first" width="11" height="12"><rect x="1" y="1" width="8" height="6" fill="#dcecfa" stroke="#4c8cc4"/><rect x="3" y="4" width="8" height="7" fill="#eef6fc" stroke="#4c8cc4"/><path d="M4 8L6 7L8 9L10 7" stroke="#4c8cc4"/></svg>
          ${["File", "View", "Insert", "Charts", "Tools", "Window", "Help"].map((m) => html`<button>${m}</button>`)}
          <span class="mdi">
            <button aria-label="Minimize chart"><svg width="6" height="8"><path d="M1 7H5" stroke="#607088" stroke-width="1.500"/></svg></button>
            <button aria-label="Restore chart"><svg width="8" height="8"><path d="M2.500 3V1.500H6.500V4.500H5.500M.500 3.500H4.500V7H.500Z" stroke="#607088"/></svg></button>
            <button aria-label="Close chart"><svg width="6" height="6"><path d="M1 1L5 5M5 1L1 5" stroke="#607088" stroke-width="1.500"/></svg></button>
          </span>
        </nav>
        <div class="tools" role="toolbar">
          ${toolbar.map((t) => this.tool(t))}
          <button class="tool wide">${this.icon("order")}New Order</button>
          ${["meta", "market2", "signal"].map((t) => this.tool(t))}
          <button class="tool wide pressed">${this.icon("auto")}AutoTrading</button>
          <span class="grip"></span><button class="tool tf">M1</button><button class="tool tf">M5</button><span class="sep"></span>
          <button class="tool end" aria-label="Search">${this.icon("search")}</button>
          <button class="tool alert" aria-label="Notifications">${this.icon("alert")}<span>1</span></button>
        </div>
        <section class="chart"><price-chart></price-chart><trade-pad></trade-pad></section>
        <nav class="sheets">
          ${tabs.map((t, i) => html`<button class="tab ${i ? "" : "active"}">${t}</button>`)}
          <button class="nav prev" aria-label="Previous"><svg width="4" height="6"><path d="M3 0V6L0 3Z" fill="#606060"/></svg></button>
          <button class="nav" aria-label="Next"><svg width="4" height="6"><path d="M1 0V6L4 3Z" fill="#606060"/></svg></button>
        </nav>
        <section class="terminal">
          <div class="gutter"><button aria-label="Close terminal"><svg width="5" height="5"><path d="M0 0L5 5M5 0L0 5" stroke="#181818" stroke-width="1.500"/></svg></button></div>
          <div>
            <table>
              <colgroup><col class="w-order"><col class="w-time"><col class="w-type"><col class="w-size"><col class="w-symbol">${[1, 2, 3, 4, 5, 6].map(() => html`<col class="w-num">`)}<col><col class="w-x"></colgroup>
              <thead><tr>${columns.map((c) => html`<th scope="col">${c}</th>`)}<th><svg class="shut" width="7" height="6"><path d="M.500.500H6.500M1 1L4 5L4 4" stroke="#909090"/></svg></th></tr></thead>
              <tbody>
                ${orders.map(([id, time, price, sl, tp, profit]) => html`<tr>
                  <td><span class="id"><svg width="11" height="13" viewBox="0 0 11 13"><path d="M.500.500H6.500L9.500 3.500V12.500H.500Z" fill="#fcfcfc" stroke="#606468"/><circle cx="8" cy="10" r="3" fill="#1c88d4"/></svg>${id}</span></td>
                  <td>2024.03.08 ${time}</td><td>buy</td><td>0.05</td><td>xauusd.</td><td>${price}</td><td>${sl}</td><td>${tp}</td>
                  <td>2162.99</td><td>0.00</td><td>0.00</td><td>${profit}</td>
                  <td><button class="shut" aria-label="Close order ${id}"><svg width="6" height="6"><path d="M.500.500L5.500 5.500M5.500.500L.500 5.500" stroke="#8c8c8c"/></svg></button></td>
                </tr>`)}
              </tbody>
              <tfoot><tr>
                <td colspan="11"><span class="id"><svg width="11" height="12"><rect x=".500" y="1" width="9" height="10" fill="#f4fcf4" stroke="#608060"/><path d="M5 3L8 6H6V9H4V6H2Z" fill="#18a030"/></svg>Balance: 1 649.43 USC  Equity: 1 846.58  Margin: 107.94  Free margin: 1 738.64  Margin level: 1710.68%</span></td>
                <td>197.15</td><td></td>
              </tr></tfoot>
            </table>
          </div>
        </section>
      </main>
      <aside class="behind"></aside>`;
  }
}
